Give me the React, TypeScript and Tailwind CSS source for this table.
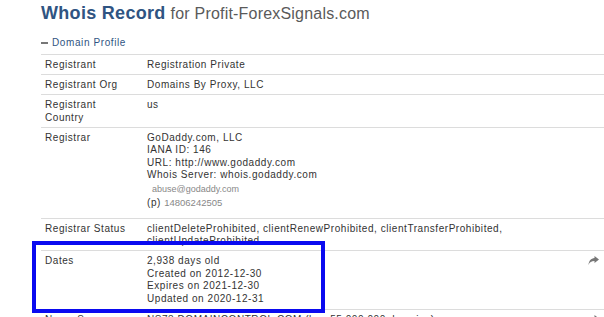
const ShareIcon = () => (
  <svg width="11" height="9" viewBox="0 0 11 9" className="text-[#777]">
    <path d="M6.5 0 L11 3.5 L6.5 7 V5 C3.5 5 1.5 6 0.5 9 C0.8 5 3 2.3 6.5 2 Z" fill="currentColor" />
  </svg>
);

const rows: { label: string[]; value: React.ReactNode; share?: boolean; pb?: string }[] = [
  { label: ["Registrant"], value: "Registration Private" },
  { label: ["Registrant Org"], value: "Domains By Proxy, LLC" },
  { label: ["Registrant", "Country"], value: "us" },
  {
    label: ["Registrar"],
    value: (
      <>
        <div>GoDaddy.com, LLC</div>
        <div>IANA ID: 146</div>
        <div>URL: http://www.godaddy.com</div>
        <div>Whois Server: whois.godaddy.com</div>
        <div className="pl-[5px] pt-[1px] text-[9px] tracking-normal text-[#888] leading-[13px]">abuse@godaddy.com</div>
        <div className="leading-[14px]">
          (p) <span className="text-[9.5px] tracking-normal text-[#888]">14806242505</span>
        </div>
      </>
    ),
    pb: "pb-[8px]",
  },
  {
    label: ["Registrar Status"],
    value: (
      <>
        <div>clientDeleteProhibited, clientRenewProhibited, clientTransferProhibited,</div>
        <div>clientUpdateProhibited</div>
      </>
    ),
  },
  {
    label: ["Dates"],
    value: (
      <>
        <div>2,938 days old</div>
        <div>Created on 2012-12-30</div>
        <div>Expires on 2021-12-30</div>
        <div>Updated on 2020-12-31</div>
      </>
    ),
    share: true,
    pb: "pb-[4px]",
  },
  {
    label: ["Name Servers"],
    value: "NS73.DOMAINCONTROL.COM (has 55,000,000 domains)",
    share: true,
  },
];

export default function App() {
  return (
    <div className="relative h-[317px] w-[604px] overflow-hidden bg-white font-['Liberation_Sans',Arial,sans-serif]">
      <div className="pl-[41px]">
        <h1 className="flex items-baseline gap-[5px] pt-[1px] leading-[24px]">
          <span className="text-[18px] font-bold tracking-[0.3px] text-[#2f5482]">Whois Record</span>
          <span className="text-[16px] tracking-[0.2px] text-[#5a5a5a]">for Profit-ForexSignals.com</span>
        </h1>
        <div className="mt-[11px] flex items-center gap-[4px] text-[10px] leading-[12px] tracking-[0.6px] text-[#2f5482]">
          <span className="block h-[2px] w-[7px] bg-[#777]" />
          <span>Domain Profile</span>
        </div>
        <div className="mt-[5px] w-[563px] border-t border-[#dcdcdc] text-[10px] leading-[12.5px] tracking-[0.55px] text-[#333]">
          {rows.map((r, i) => (
            <div key={i} className={`flex border-b border-[#dcdcdc] pt-[4px] ${r.pb ?? "pb-[2.5px]"}`}>
              <div className="w-[106px] shrink-0 pl-[4px]">
                {r.label.map((l) => (
                  <div key={l}>{l}</div>
                ))}
              </div>
              <div className="flex-1">{r.value}</div>
              {r.share && (
                <div className="w-[16px] shrink-0 pt-[1px]">
                  <ShareIcon />
                </div>
              )}
            </div>
          ))}
        </div>
      </div>
      <div className="absolute left-[32px] top-[241px] h-[72px] w-[293px] border-4 border-[#0a0af0]" />
    </div>
  );
}
